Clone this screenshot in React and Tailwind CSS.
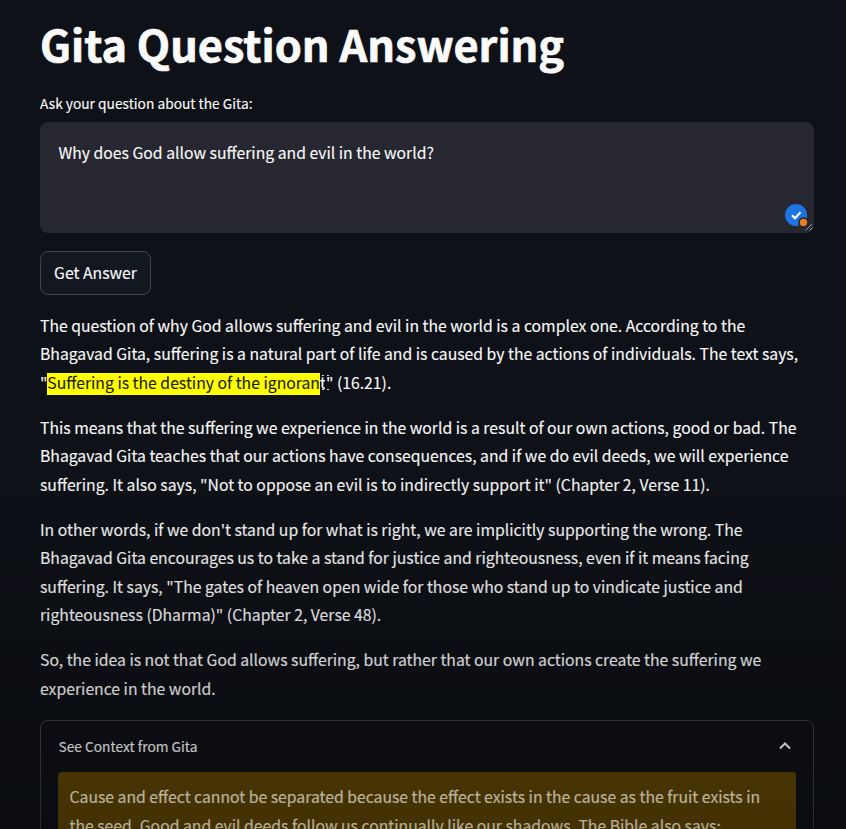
import React from 'react';

const paragraphs = [
  [
    'This means that the suffering we experience in the world is a result of our own actions, good or bad. The',
    'Bhagavad Gita teaches that our actions have consequences, and if we do evil deeds, we will experience',
    'suffering. It also says, "Not to oppose an evil is to indirectly support it" (Chapter 2, Verse 11).',
  ],
  [
    "In other words, if we don't stand up for what is right, we are implicitly supporting the wrong. The",
    'Bhagavad Gita encourages us to take a stand for justice and righteousness, even if it means facing',
    'suffering. It says, "The gates of heaven open wide for those who stand up to vindicate justice and',
    'righteousness (Dharma)" (Chapter 2, Verse 48).',
  ],
  [
    'So, the idea is not that God allows suffering, but rather that our own actions create the suffering we',
    'experience in the world.',
  ],
];

function Line({ children }) {
  return <span className="block whitespace-nowrap">{children}</span>;
}

export default function App() {
  return (
    <div className="relative h-[829px] w-[846px] overflow-hidden bg-[#0e1117] pl-10 pr-8 font-['Noto_Sans_CJK_SC',sans-serif] text-[15.76px] leading-[28.45px] text-[#fafafa] [-webkit-text-stroke:0.12px]">
      <h1 className="h-[92px] whitespace-nowrap pt-[15px] text-[43.3px] font-bold leading-[56px] [-webkit-text-stroke:0.7px]">Gita Question Answering</h1>
      <label className="block h-[30px] text-[13.76px] leading-[22px]">Ask your question about the Gita:</label>
      <div className="relative h-[111px] w-[774px] rounded-lg bg-[#262730] pl-[18.4px] pr-[18px] pt-[17px]">
        Why does God allow suffering and evil in the world?
        <svg className="absolute bottom-0 right-0" width="32" height="32" viewBox="0 0 32 32" fill="none">
          <circle cx="14" cy="14" r="11" fill="#1f74e4" />
          <path d="M10 14.3l3 3 5.5-6" stroke="#fff" strokeWidth="2" />
          <circle cx="21.5" cy="21.5" r="5.3" fill="#22232b" />
          <circle cx="21.5" cy="21.5" r="3.7" fill="#e57e25" />
          <path d="M23.5 29.5l6.5-6.5M27.5 29.5l3-3" stroke="#a5a6ab" strokeWidth="0.9" />
        </svg>
      </div>
      <button className="mt-[18px] flex h-11 w-[111px] items-center justify-center rounded-lg border border-[#414349] bg-[#131720]">
        Get Answer
      </button>
      <p className="mt-[17px]">
        <Line>The question of why God allows suffering and evil in the world is a complex one. According to the</Line>
        <Line>Bhagavad Gita, suffering is a natural part of life and is caused by the actions of individuals. The text says,</Line>
        <Line>
          "<mark className="bg-linear-to-b from-[#ffff00] to-[#ffff00] bg-[length:100%_22px] bg-[position:0_100%] bg-no-repeat bg-transparent pb-px text-[#1c1c08]">Suffering is the destiny of the ignoran</mark>
          <span className="relative">
            t
            <svg className="absolute -right-[4px] top-[3px]" width="9" height="17" viewBox="0 0 9 17" fill="none">
              <path d="M1 1.5h2M6 1.5h2M1 15.5h2M6 15.5h2" stroke="#ddd" />
              <path d="M4.5 2v13" stroke="#000" strokeWidth="1" />
            </svg>
          </span>" (16.21).
        </Line>
      </p>
      {paragraphs.map((lines) => (
        <p key={lines[0]} className="mt-[16.6px]">
          {lines.map((line) => <Line key={line}>{line}</Line>)}
        </p>
      ))}
      <section className="mt-[17px] h-[160px] w-[774px] rounded-lg border border-[#3d3f45] px-[17px]">
        <div className="flex h-[51px] items-center justify-between pr-[5px] text-[13.76px]">
          <span className="pl-[0.5px]">See Context from Gita</span>
          <svg className="-mt-[2px]" width="12" height="8" viewBox="0 0 12 8" fill="none" stroke="#fafafa" strokeWidth="2">
            <path d="M1 6.5l5-5 5 5" />
          </svg>
        </div>
        <div className="h-[130px] rounded bg-[#5e4506] px-[11.5px] pt-[11px] text-[#fff2d8]">
          <Line>Cause and effect cannot be separated because the effect exists in the cause as the fruit exists in</Line>
          <Line>the seed. Good and evil deeds follow us continually like our shadows. The Bible also says:</Line>
        </div>
      </section>
      <div className="pointer-events-none absolute inset-x-0 bottom-0 h-[379px] bg-linear-to-b from-black/0 to-black/29" />
    </div>
  );
}
